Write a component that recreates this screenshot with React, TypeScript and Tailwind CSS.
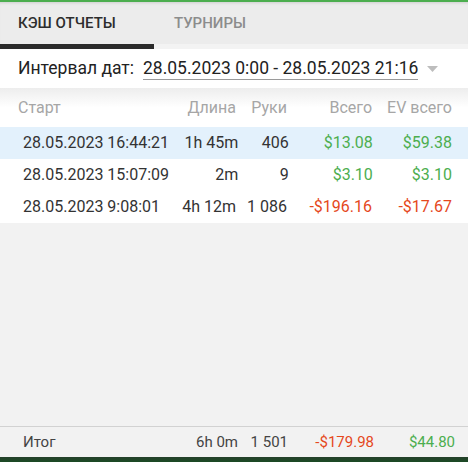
import React from 'react';

type Row = { start: string; len: string; hands: string; total: string; ev: string; active?: boolean };

const rows: Row[] = [
  { start: '28.05.2023 16:44:21', len: '1h 45m', hands: '406', total: '$13.08', ev: '$59.38', active: true },
  { start: '28.05.2023 15:07:09', len: '2m', hands: '9', total: '$3.10', ev: '$3.10' },
  { start: '28.05.2023 9:08:01', len: '4h 12m', hands: '1 086', total: '-$196.16', ev: '-$17.67' },
];

const money = (v: string) => (v.startsWith('-') ? 'text-[#e5481c]' : 'text-[#4cae4f]');

export default function CashReports() {
  return (
    <div className="w-[468px] h-[462px] flex flex-col bg-[#f2f2f2] overflow-hidden font-['Roboto',sans-serif]">
      {/* top tabs */}
      <div className="h-[2px] bg-[#4cae4f]" />
      <div className="bg-[#ececec] shadow-[inset_0_3px_3px_-2px_rgba(0,0,0,0.12)]">
        <div className="flex h-[42px] items-center text-[15px] font-medium">
          <div className="w-[154px] pl-[18px] text-[#2d2d2d]">КЭШ ОТЧЕТЫ</div>
          <div className="pl-[20px] text-[#8c8c8c]">ТУРНИРЫ</div>
        </div>
        <div className="flex h-[5px] bg-[#f3f3f3]">
          <div className="w-[154px] bg-[#2b2b2b]" />
        </div>
      </div>

      {/* date interval */}
      <div className="bg-white h-[39px] flex items-center pl-[18px] text-[17.5px] text-[#222]">
        <span>Интервал дат:</span>
        <span className="ml-[9px] border-b border-[#9a9a9a] leading-[22px]">28.05.2023 0:00 - 28.05.2023 21:16</span>
        <svg className="ml-[9px] mt-[1px]" width="11" height="6" viewBox="0 0 11 6">
          <path d="M0 0h11L5.5 6z" fill="#bdbdbd" />
        </svg>
      </div>

      {/* table header */}
      <div className="h-[39px] flex items-center pl-[18px] pr-[16px] text-[16px] text-[#a6a6a6] bg-gradient-to-b from-[#ededed] via-white to-white">
        <div className="flex-1">Старт</div>
        <div className="w-[70px] text-right">Длина</div>
        <div className="w-[51px] text-right">Руки</div>
        <div className="w-[85px] text-right">Всего</div>
        <div className="w-[80px] text-right">EV всего</div>
      </div>

      {/* rows */}
      <div className="bg-white">
        {rows.map((r) => (
          <div
            key={r.start}
            className={`h-[32px] flex items-center pl-[23px] pr-[16px] text-[16px] text-[#333] ${r.active ? 'bg-[#e3f1fc]' : ''}`}
          >
            <div className="flex-1 whitespace-nowrap">{r.start}</div>
            <div className="w-[70px] text-right">{r.len}</div>
            <div className="w-[51px] text-right">{r.hands}</div>
            <div className={`w-[85px] text-right ${money(r.total)}`}>{r.total}</div>
            <div className={`w-[80px] text-right ${money(r.ev)}`}>{r.ev}</div>
          </div>
        ))}
      </div>

      <div className="flex-1" />

      {/* footer total */}
      <div className="h-[31px] border-t border-[#d2d2d2] flex items-center pl-[23px] pr-[13px] text-[15px] text-[#444]">
        <div className="flex-1">Итог</div>
        <div className="w-[70px] text-right">6h 0m</div>
        <div className="w-[50px] text-right">1 501</div>
        <div className="w-[86px] text-right text-[#e5481c]">-$179.98</div>
        <div className="w-[81px] text-right text-[#4cae4f]">$44.80</div>
      </div>
      <div className="h-[5px] bg-gradient-to-b from-[#24402a] to-[#1b4a24]" />
    </div>
  );
}
